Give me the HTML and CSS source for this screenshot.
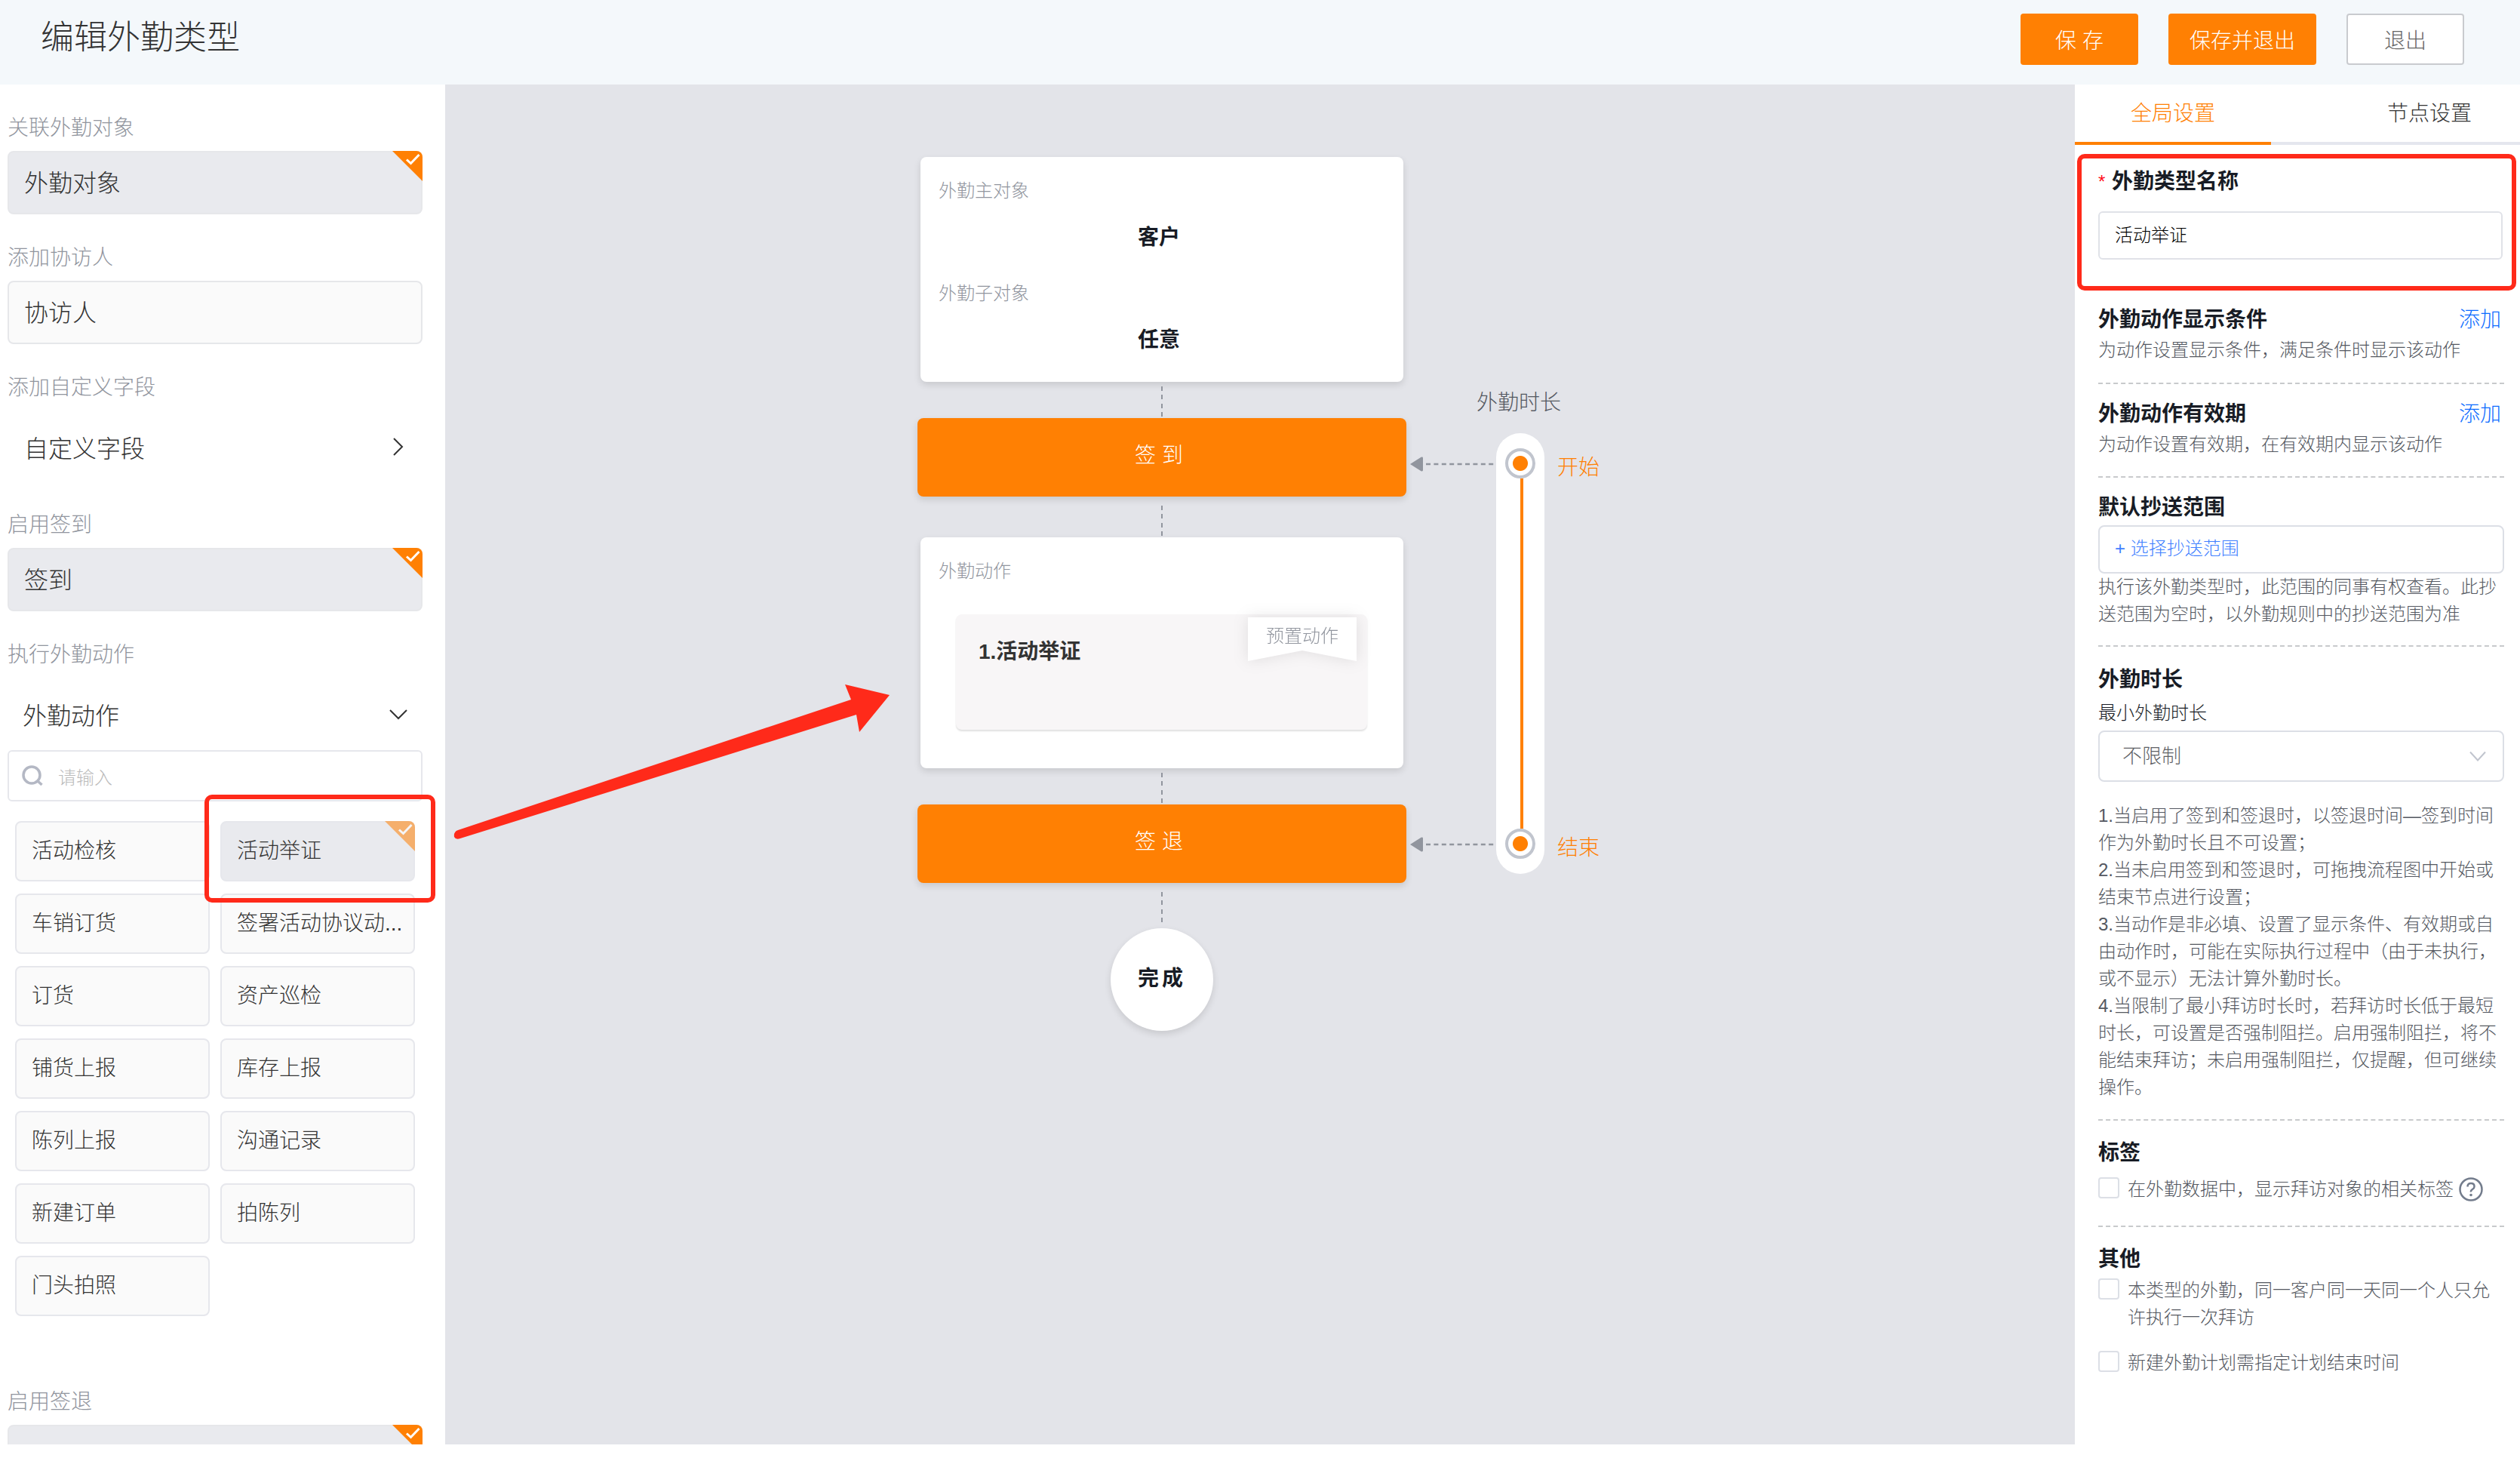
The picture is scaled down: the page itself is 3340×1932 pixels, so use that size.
FILE: index.html
```html
<!DOCTYPE html>
<html lang="zh-CN">
<head>
<meta charset="UTF-8">
<title>编辑外勤类型</title>
<link rel="stylesheet" href="styles.css">
</head>
<body>

  <header class="header">
    <h1>编辑外勤类型</h1>
    <div class="header-buttons">
      <button class="btn btn-save">保 存</button>
      <button class="btn btn-save-exit">保存并退出</button>
      <button class="btn btn-exit">退出</button>
    </div>
  </header>

  <main class="main">
    <aside class="sidebar">
      <div class="label">关联外勤对象</div>
      <div class="item selected">外勤对象
        <svg class="corner" viewBox="0 0 40 40"><path d="M0 0H32A8 8 0 0 1 40 8V40Z"/><path class="tick" d="M19 11.500L24.500 16.500L35.500 5"/></svg>
      </div>
      <div class="label">添加协访人</div>
      <div class="item">协访人</div>
      <div class="label">添加自定义字段</div>
      <div class="fold fold-field">
        <span>自定义字段</span>
        <svg class="chevron" viewBox="0 0 24 24"><path d="M6 1L17 12L6 23"/></svg>
      </div>
      <div class="label">启用签到</div>
      <div class="item selected">签到
        <svg class="corner" viewBox="0 0 40 40"><path d="M0 0H32A8 8 0 0 1 40 8V40Z"/><path class="tick" d="M19 11.500L24.500 16.500L35.500 5"/></svg>
      </div>
      <div class="label">执行外勤动作</div>
      <div class="fold fold-action">
        <span>外勤动作</span>
        <svg class="chevron" viewBox="0 0 24 24"><path d="M1 7L12 18L23 7"/></svg>
      </div>
      <div class="search">
        <svg class="search-icon" viewBox="0 0 28 28"><circle cx="13" cy="13" r="11"/><path d="M21 21L26.500 26"/></svg>
        <span>请输入</span>
      </div>
      <div class="actions">
        <div class="action">活动检核</div>
        <div class="action selected">活动举证
          <svg class="corner faded" viewBox="0 0 40 40"><path d="M0 0H32A8 8 0 0 1 40 8V40Z"/><path class="tick" d="M19 11.500L24.500 16.500L35.500 5"/></svg>
        </div>
        <div class="action">车销订货</div>
        <div class="action">签署活动协议动...</div>
        <div class="action">订货</div>
        <div class="action">资产巡检</div>
        <div class="action">铺货上报</div>
        <div class="action">库存上报</div>
        <div class="action">陈列上报</div>
        <div class="action">沟通记录</div>
        <div class="action">新建订单</div>
        <div class="action">拍陈列</div>
        <div class="action">门头拍照</div>
      </div>
      <div class="label">启用签退</div>
      <div class="item selected">签退
        <svg class="corner" viewBox="0 0 40 40"><path d="M0 0H32A8 8 0 0 1 40 8V40Z"/><path class="tick" d="M19 11.500L24.500 16.500L35.500 5"/></svg>
      </div>
    </aside>

    <section class="canvas">
      <div class="flow">
        <div class="card card-object">
          <div class="card-label">外勤主对象</div>
          <div class="card-value">客户</div>
          <div class="card-label">外勤子对象</div>
          <div class="card-value">任意</div>
        </div>
        <div class="link link-below-card"></div>
        <div class="step">签 到</div>
        <div class="link link-below-step"></div>
        <div class="card card-action">
          <div class="card-label">外勤动作</div>
          <div class="task">
            <span>1.活动举证</span>
            <div class="ribbon"><div class="ribbon-text">预置动作</div></div>
          </div>
        </div>
        <div class="link link-below-card"></div>
        <div class="step">签 退</div>
        <div class="link link-below-step last"></div>
        <div class="done">完成</div>
      </div>

      <div class="duration">
        <div class="duration-title">外勤时长</div>
        <div class="duration-body">
          <div class="arrows">
            <svg viewBox="0 0 112 20"><path d="M0 10L14.500 .800Q17 0 17 2V18Q17 20 14.500 19.200Z"/><path class="dash" d="M21 10H111"/></svg>
            <svg viewBox="0 0 112 20"><path d="M0 10L14.500 .800Q17 0 17 2V18Q17 20 14.500 19.200Z"/><path class="dash" d="M21 10H111"/></svg>
          </div>
          <div class="track">
            <i class="knob"></i>
            <i class="bar"></i>
            <i class="knob"></i>
          </div>
          <div class="ends">
            <span>开始</span>
            <span>结束</span>
          </div>
        </div>
      </div>
    </section>

    <aside class="settings">
      <nav class="tabs">
        <div class="tab active">全局设置</div>
        <div class="tab">节点设置</div>
      </nav>
      <div class="panel">
        <div class="group group-name">
          <h2><em>*</em>外勤类型名称</h2>
          <div class="input">活动举证</div>
        </div>
        <div class="group group-short">
          <h2>外勤动作显示条件<a class="add">添加</a></h2>
          <p>为动作设置显示条件，满足条件时显示该动作</p>
        </div>
        <div class="group group-short">
          <h2>外勤动作有效期<a class="add">添加</a></h2>
          <p>为动作设置有效期，在有效期内显示该动作</p>
        </div>
        <div class="group group-cc">
          <h2>默认抄送范围</h2>
          <div class="picker">+ 选择抄送范围</div>
          <p>执行该外勤类型时，此范围的同事有权查看。此抄<br>送范围为空时，以外勤规则中的抄送范围为准</p>
        </div>
        <div class="group group-time">
          <h2>外勤时长</h2>
          <div class="sub">最小外勤时长</div>
          <div class="select">
            <span>不限制</span>
            <svg class="chevron" viewBox="0 0 24 24"><path d="M2 6.500L12 17.500L22 6.500"/></svg>
          </div>
          <p>1.当启用了签到和签退时，以签退时间—签到时间<br>作为外勤时长且不可设置；<br>2.当未启用签到和签退时，可拖拽流程图中开始或<br>结束节点进行设置；<br>3.当动作是非必填、设置了显示条件、有效期或自<br>由动作时，可能在实际执行过程中（由于未执行，<br>或不显示）无法计算外勤时长。<br>4.当限制了最小拜访时长时，若拜访时长低于最短<br>时长，可设置是否强制阻拦。启用强制阻拦，将不<br>能结束拜访；未启用强制阻拦，仅提醒，但可继续<br>操作。</p>
        </div>
        <div class="group group-tag">
          <h2>标签</h2>
          <div class="check">
            <i class="box"></i>
            <p>在外勤数据中，显示拜访对象的相关标签</p>
            <svg class="help" viewBox="0 0 32 32"><circle cx="16" cy="16" r="14.500"/><path d="M11.500 12.500Q11.500 8 16 8T20.500 12.200Q20.500 14.500 18 16T16 19.500"/><circle class="dot" cx="16" cy="23.500" r="1.800"/></svg>
          </div>
        </div>
        <div class="group group-other">
          <h2>其他</h2>
          <div class="check">
            <i class="box"></i>
            <p>本类型的外勤，同一客户同一天同一个人只允<br>许执行一次拜访</p>
          </div>
          <div class="check">
            <i class="box"></i>
            <p>新建外勤计划需指定计划结束时间</p>
          </div>
        </div>
      </div>
    </aside>
  </main>

  <!-- highlight marks over the page -->
  <div class="mark mark-action"></div>
  <div class="mark mark-name"></div>
  <svg class="mark-arrow" viewBox="0 0 600 260"><path d="M12 229Q11 222 17 220L538 47L530 27L589 41L549 90L545 67L20 231Q14 233 12 229Z"/></svg>

</body>
</html>
```
FILE: styles.css
```css
* {
  box-sizing: border-box;
  margin: 0;
  padding: 0;
}

body {
  width: 3340px;
  height: 1932px;
  overflow: hidden;
  position: relative;
  font-family: "Liberation Sans", "Noto Sans CJK SC", sans-serif;
  font-weight: 300;
  color: #333;
  background-color: #fff;
}

svg {
  display: block;
  flex: none;
}

/* Header */

.header {
  display: flex;
  justify-content: space-between;
  align-items: flex-start;
  height: 112px;
  padding: 18px 74px 0 54px;
  background-color: #f4f8fb;
}

.header h1 {
  font-size: 44px;
  font-weight: 300;
  line-height: 64px;
}

.header-buttons {
  display: flex;
  gap: 40px;
}

.btn {
  height: 68px;
  border: none;
  border-radius: 4px;
  background-color: #ff8003;
  color: #fff;
  font-family: inherit;
  font-size: 28px;
  font-weight: 300;
}

.btn-save,
.btn-exit {
  width: 156px;
}

.btn-save-exit {
  width: 196px;
}

.btn-exit {
  border: 2px solid #c9cbcf;
  background-color: #fff;
  color: #666;
}

.main {
  display: flex;
  height: 1802px;
  overflow: hidden;
}

/* Left sidebar */

.sidebar {
  flex: none;
  width: 590px;
  padding: 28px 30px 0 10px;
}

.label {
  height: 60px;
  line-height: 60px;
  font-size: 28px;
  color: #91959e;
}

.item {
  position: relative;
  height: 84px;
  margin-bottom: 28px;
  padding-left: 20px;
  border: 2px solid #e6e7ea;
  border-radius: 8px;
  background-color: #fafafa;
  font-size: 32px;
  line-height: 82px;
}

.selected {
  background-color: #e9eaee;
}

.corner {
  position: absolute;
  top: -2px;
  right: -2px;
  width: 40px;
  height: 40px;
  fill: #ff8003;
}

.corner .tick {
  fill: none;
  stroke: #fff;
  stroke-width: 3;
}

.faded {
  opacity: 0.55;
}

.fold {
  display: flex;
  justify-content: space-between;
  align-items: center;
  height: 96px;
  padding: 0 20px 0 22px;
  font-size: 32px;
}

.fold-field {
  margin-bottom: 26px;
}

.fold-action {
  padding-left: 20px;
}

.chevron {
  width: 24px;
  height: 24px;
  fill: none;
  stroke: #333;
  stroke-width: 2;
}

.search {
  display: flex;
  align-items: center;
  gap: 20px;
  height: 68px;
  padding-left: 17px;
  border: 2px solid #e6e7ec;
  border-radius: 6px;
  font-size: 24px;
  color: #bbb;
}

.search-icon {
  width: 28px;
  height: 28px;
  fill: none;
  stroke: #b4b8c4;
  stroke-width: 3.5;
}

.actions {
  display: grid;
  grid-template-columns: 258px 258px;
  grid-auto-rows: 80px;
  gap: 16px 14px;
  margin: 26px 0 84px;
  padding-left: 10px;
}

.action {
  position: relative;
  padding-left: 20px;
  border: 2px solid #e6e7ec;
  border-radius: 8px;
  background-color: #fafafa;
  font-size: 28px;
  line-height: 76px;
  white-space: nowrap;
}

.action.selected {
  background-color: #e9eaee;
}

/* Flow chart */

.canvas {
  flex: none;
  display: flex;
  width: 2160px;
  padding: 96px 0 0 626px;
  background-color: #e3e4e9;
}

.flow {
  display: flex;
  flex-direction: column;
  align-items: center;
  width: 648px;
}

.card {
  width: 640px;
  padding: 24px;
  border-radius: 8px;
  background-color: #fff;
  box-shadow: 0 4px 10px rgba(0, 0, 0, 0.12);
}

.card-object {
  height: 298px;
}

.card-action {
  height: 306px;
}

.card-label {
  height: 42px;
  line-height: 42px;
  font-size: 24px;
  color: #91959e;
}

.card-value {
  height: 94px;
  padding-right: 8px;
  line-height: 82px;
  font-size: 28px;
  font-weight: bold;
  color: #181c25;
  text-align: center;
}

.link {
  flex: none;
  width: 2px;
  height: 40px;
  background: repeating-linear-gradient(#91959e 0 6px, transparent 6px 11.4px);
}

.link-below-card {
  margin: 6px 0 2px;
}

.link-below-step {
  margin: 12px 0 2px;
}

.link.last {
  margin-bottom: 8px;
}

.step {
  width: 648px;
  height: 104px;
  padding-right: 8px;
  border-radius: 8px;
  background-color: #ff8003;
  box-shadow: 0 4px 10px rgba(0, 0, 0, 0.12);
  color: #fff;
  font-size: 28px;
  line-height: 100px;
  text-align: center;
}

.task {
  display: flex;
  justify-content: space-between;
  width: 545px;
  height: 153px;
  margin: 36px 0 0 23px;
  padding: 4px 14px 0 30px;
  border-radius: 8px;
  background-color: #f8f6f7;
  box-shadow: 0 2px 2px rgba(0, 0, 0, 0.12);
  font-size: 28px;
  font-weight: bold;
  line-height: 92px;
}

.ribbon {
  height: 58px;
  filter: drop-shadow(0 0 10px rgba(0, 0, 0, 0.1));
}

.ribbon-text {
  width: 144px;
  height: 58px;
  background-color: #fff;
  clip-path: polygon(0 0, 100% 0, 100% 100%, 50% 76%, 0 100%);
  color: #91959e;
  font-size: 24px;
  font-weight: 300;
  line-height: 50px;
  text-align: center;
}

.done {
  width: 136px;
  height: 136px;
  border-radius: 50%;
  background-color: #fff;
  box-shadow: 0 4px 10px rgba(0, 0, 0, 0.12);
  color: #181c25;
  font-size: 28px;
  font-weight: bold;
  letter-spacing: 4px;
  line-height: 134px;
  text-align: center;
}

/* Duration slider */

.duration {
  width: 260px;
  padding: 306px 0 0 5px;
}

.duration-title {
  height: 60px;
  padding-left: 88px;
  font-size: 28px;
  line-height: 40px;
  color: #545861;
}

.duration-body {
  display: flex;
  height: 584px;
}

.arrows {
  display: flex;
  flex-direction: column;
  justify-content: space-between;
  width: 114px;
  padding: 31px 0 29px;
}

.arrows svg {
  width: 112px;
  height: 20px;
  fill: #91959e;
}

.arrows .dash {
  stroke: #91959e;
  stroke-width: 2.5;
  stroke-dasharray: 6 4.4;
}

.track {
  display: flex;
  flex-direction: column;
  align-items: center;
  width: 64px;
  padding: 20px 0;
  border-radius: 32px;
  background-color: #fff;
}

.knob {
  width: 40px;
  height: 40px;
  border: 4px solid #c1c5ce;
  border-radius: 50%;
  background: radial-gradient(#ff8003 9.5px, #fff 10.5px);
}

.bar {
  flex: 1;
  width: 4px;
  margin-left: 4px;
  background-color: #ff8003;
}

.ends {
  display: flex;
  flex-direction: column;
  justify-content: space-between;
  padding: 26px 0 14px 17px;
  font-size: 28px;
  line-height: 40px;
  color: #ff8003;
}

/* Right settings */

.settings {
  flex: none;
  width: 590px;
}

.tabs {
  display: flex;
  height: 80px;
  border-bottom: 4px solid #e4e6ee;
  font-size: 28px;
  line-height: 77px;
}

.tab {
  flex: 1;
  padding-left: 84px;
}

.tab.active {
  flex: none;
  width: 260px;
  height: 80px;
  padding-left: 74px;
  border-bottom: 4px solid #ff8003;
  color: #ff8003;
}

.tab + .tab {
  padding-left: 154px;
}

.panel {
  padding: 0 21px 0 31px;
}

.group {
  border-bottom: 2px dashed #c8cacc;
  font-size: 24px;
  line-height: 36px;
  color: #545861;
}

.group h2 {
  display: flex;
  height: 40px;
  font-size: 28px;
  font-weight: bold;
  line-height: 40px;
  color: #181c25;
}

.group em {
  width: 18px;
  color: #ff0d1a;
  font-size: 24px;
  font-style: normal;
  font-weight: normal;
}

.add {
  margin-left: auto;
  padding-right: 4px;
  color: #0c6cff;
  font-weight: 300;
}

.group-name {
  height: 212px;
  padding-top: 29px;
  border-bottom: none;
}

.input {
  width: 536px;
  height: 64px;
  margin-top: 19px;
  padding-left: 20px;
  border: 2px solid #e0e2e8;
  border-radius: 6px;
  color: #000;
  line-height: 60px;
}

.group-short {
  height: 124px;
  padding-top: 20px;
}

.group-name + .group-short {
  height: 105px;
  padding-top: 0;
}

.group-short p {
  padding-top: 2px;
}

.group-cc {
  height: 224px;
  padding-top: 20px;
}

.picker {
  height: 64px;
  margin: 3px 0 0;
  padding-left: 20px;
  border: 2px solid #dcdfe6;
  border-radius: 8px;
  color: #4080ff;
  line-height: 58px;
}

.group-time {
  height: 628px;
  padding-top: 24px;
}

.sub {
  padding-top: 6px;
  color: #181c25;
}

.select {
  display: flex;
  justify-content: space-between;
  align-items: center;
  height: 68px;
  margin: 5px 0 27px;
  padding: 0 21px 0 30px;
  border: 2px solid #dcdfe6;
  border-radius: 8px;
  color: #606266;
  font-size: 26px;
}

.select .chevron {
  stroke: #c1c5ce;
}

.group-tag {
  height: 141px;
  padding-top: 23px;
}

.check {
  display: flex;
  margin-top: 10px;
}

.box {
  flex: none;
  width: 28px;
  height: 28px;
  margin: 2px 11px 0 0;
  border: 2px solid #dcdfe6;
  border-radius: 4px;
}

.help {
  width: 32px;
  height: 36px;
  margin-left: 7px;
  fill: none;
  stroke: #737c8c;
  stroke-width: 2.5;
}

.help .dot {
  fill: #737c8c;
  stroke: none;
}

.group-other {
  padding-top: 23px;
  border-bottom: none;
}

.group-other .check {
  margin: 3px 0 24px;
}

/* Red marks */

.mark {
  position: absolute;
  border: 6px solid #ff2a1a;
  border-radius: 10px;
}

.mark-action {
  left: 271px;
  top: 1053px;
  width: 306px;
  height: 143px;
}

.mark-name {
  left: 2753px;
  top: 204px;
  width: 582px;
  height: 181px;
}

.mark-arrow {
  position: absolute;
  left: 590px;
  top: 880px;
  width: 600px;
  height: 260px;
  fill: #ff2a1a;
}
```
